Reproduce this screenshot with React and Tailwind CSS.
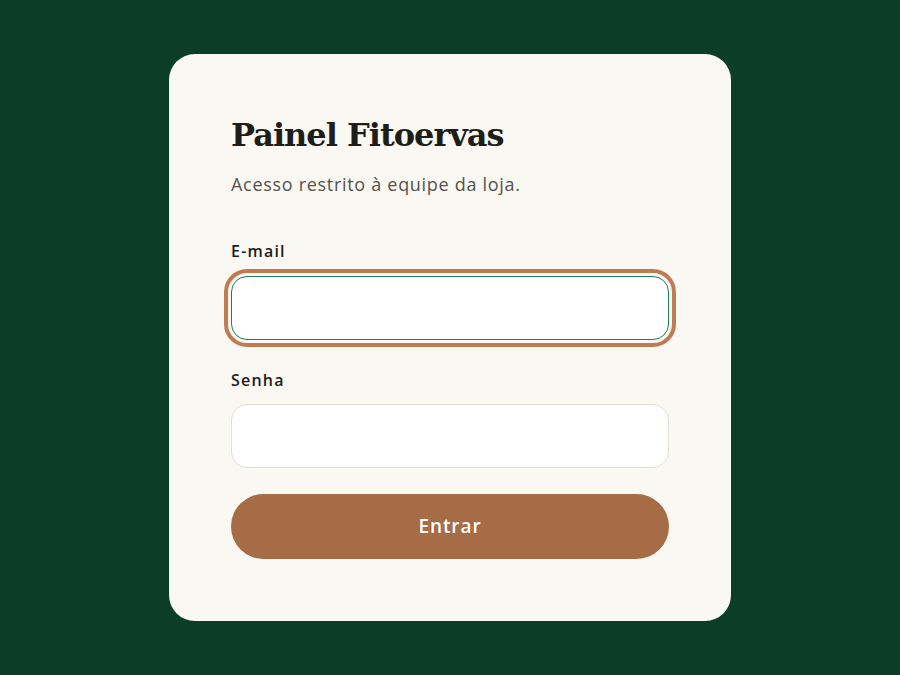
import React from 'react';

export default function App() {
  return (
    <div className="min-h-screen w-full bg-[#0c3d26] flex items-center justify-center font-['Open_Sans',sans-serif]">
      <div className="w-[562px] bg-[#faf8f2] rounded-[26px] px-[62px] pt-[59px] pb-[62px]">
        <h1 className="font-['DejaVu_Serif',serif] font-bold text-[32px] leading-[44px] text-[#1e1d19] tracking-[-1px]">
          Painel Fitoervas
        </h1>
        <p className="mt-[14px] text-[18px] leading-[26px] text-[#55524b] tracking-[0.7px]">
          Acesso restrito à equipe da loja.
        </p>

        <form className="mt-[42px] flex flex-col" onSubmit={(e) => e.preventDefault()}>
          <label className="block text-[16px] leading-[24px] font-semibold text-[#1e1d19] tracking-[1.2px] mb-[13px]">
            E-mail
          </label>
          <input
            type="email"
            className="h-[64px] w-full rounded-[16px] bg-white border border-[#1e7f58] outline-[4px] outline-solid outline-[#c07b52] outline-offset-[3px]"
          />

          <label className="block mt-[28px] text-[16px] leading-[24px] font-semibold text-[#1e1d19] tracking-[1.2px] mb-[12px]">
            Senha
          </label>
          <input
            type="password"
            className="h-[64px] w-full rounded-[16px] bg-white border border-[#e3dfd3] outline-none"
          />

          <button
            type="submit"
            className="mt-[26px] h-[65px] w-full rounded-full bg-[#a66c46] text-white text-[19px] font-semibold tracking-[0.9px]"
          >
            Entrar
          </button>
        </form>
      </div>
    </div>
  );
}
